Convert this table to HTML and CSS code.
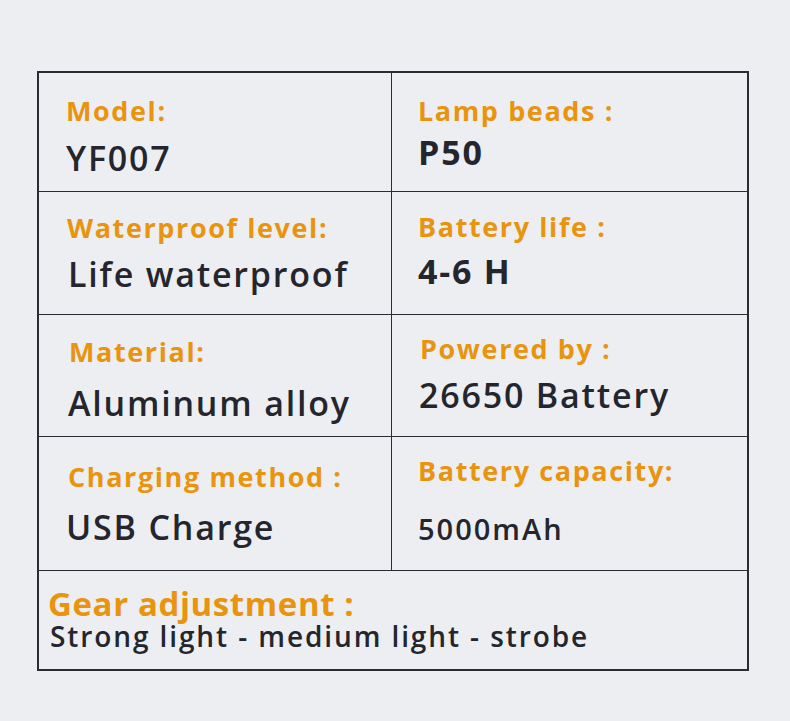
FILE: index.html
```html
<!DOCTYPE html>
<html lang="en">
<head>
<meta charset="utf-8">
<title>Specs</title>
<link rel="stylesheet" href="styles.css">
</head>
<body>
<div class="spec">
  <div class="cell left c1"><div class="label">Model:</div><div class="value">YF007</div></div>
  <div class="cell c2"><div class="label">Lamp beads :</div><div class="value bold">P50</div></div>
  <div class="cell left c3"><div class="label">Waterproof level:</div><div class="value">Life waterproof</div></div>
  <div class="cell c4"><div class="label">Battery life :</div><div class="value bold">4-6 H</div></div>
  <div class="cell left c5"><div class="label">Material:</div><div class="value">Aluminum alloy</div></div>
  <div class="cell c6"><div class="label">Powered by :</div><div class="value">26650 Battery</div></div>
  <div class="cell left c7"><div class="label">Charging method :</div><div class="value">USB Charge</div></div>
  <div class="cell c8"><div class="label">Battery capacity:</div><div class="value small">5000mAh</div></div>
  <div class="cell full c9"><div class="label big">Gear adjustment :</div><div class="value line">Strong light - medium light - strobe</div></div>
</div>
</body>
</html>
```
FILE: styles.css
```css
html, body {
  margin: 0;
  padding: 0;
  background: #edeef2;
}
body {
  padding: 71px 0 0 37px;
  font-family: "Open Sans", "Noto Sans", sans-serif;
}
.spec {
  width: 708px;
  border: 2px solid #2a2b33;
  display: grid;
  grid-template-columns: 353px 1fr;
  grid-template-rows: 119px 123px 122px 134px 98px;
}
.cell {
  display: flex;
  flex-direction: column;
  border-bottom: 1px solid #2a2b33;
  box-sizing: border-box;
}
.cell.left {
  border-right: 1px solid #2a2b33;
}
.cell.full {
  grid-column: 1 / 3;
  border-bottom: none;
}
.label {
  font-size: 27px;
  line-height: 1;
  height: 27px;
  font-weight: 700;
  color: #e9940f;
  letter-spacing: 1.6px;
  white-space: nowrap;
}
.label.big {
  font-size: 33px;
  height: 33px;
  letter-spacing: 0.6px;
}
.value {
  font-size: 34px;
  line-height: 1;
  height: 34px;
  font-weight: 600;
  color: #25262d;
  letter-spacing: 1.8px;
  white-space: nowrap;
}
.value.bold { font-weight: 700; }
.value.small { font-size: 29px; height: 29px; font-weight: 600; letter-spacing: 2px; }
.value.line { font-size: 28px; height: 28px; letter-spacing: 1.9px; }

.c1 { padding: 24px 0 0 27px; }
.c1 .value { margin-top: 17px; }
.c2 { padding: 24px 0 0 26px; }
.c2 .value { margin-top: 11px; }
.c3 { padding: 22px 0 0 28px; }
.c3 .value { margin-top: 16px; margin-left: 1px; }
.c4 { padding: 21px 0 0 26px; }
.c4 .value { margin-top: 14px; }
.c5 { padding: 23px 0 0 30px; }
.c5 .value { margin-top: 21px; margin-left: -1px; }
.c6 { padding: 20px 0 0 28px; }
.c6 .value { margin-top: 16px; margin-left: -1px; }
.c7 { padding: 26px 0 0 29px; }
.c7 .value { margin-top: 20px; margin-left: -2px; }
.c8 { padding: 20px 0 0 26px; }
.c8 .value { margin-top: 30px; }
.c9 { padding: 16px 0 0 9px; }
.c9 .value { margin-top: 2px; margin-left: 2px; }
```
